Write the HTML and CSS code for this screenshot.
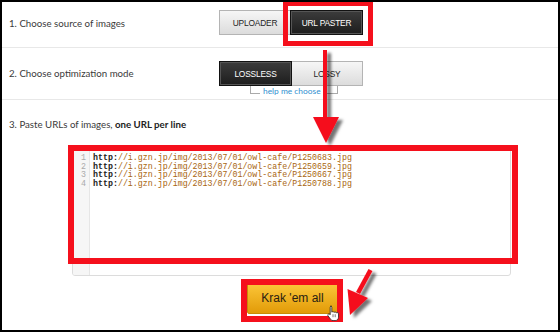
FILE: index.html
```html
<!DOCTYPE html>
<html lang="en">
<head>
    <meta charset="UTF-8">
    <title>Kraken - URL paster</title>
    <link rel="stylesheet" href="styles.css">
</head>
<body>
    <div class="page">
        <div class="row row-source">
            <div class="label">1. Choose source of images</div>
            <div class="toggle">
                <button class="btn btn-uploader">UPLOADER</button>
                <button class="btn btn-paster active">URL PASTER</button>
            </div>
        </div>

        <div class="row row-mode">
            <div class="label">2. Choose optimization mode</div>
            <div class="mode">
                <div class="toggle">
                    <button class="btn btn-lossless active">LOSSLESS</button>
                    <button class="btn btn-lossy">LOSSY</button>
                </div>
                <div class="help"><span class="help-text">help me choose</span></div>
            </div>
        </div>

        <div class="paste">
            <div class="label">3. Paste URLs of images, <b>one URL per line</b></div>
            <div class="editor">
                <div class="gutter">
                    <div>1</div>
                    <div>2</div>
                    <div>3</div>
                    <div>4</div>
                </div>
                <div class="code">
                    <div class="line"><span class="kw">http:</span><span class="str">//i.gzn.jp/img/2013/07/01/owl-cafe/P1250683.jpg</span></div>
                    <div class="line"><span class="kw">http:</span><span class="str">//i.gzn.jp/img/2013/07/01/owl-cafe/P1250659.jpg</span></div>
                    <div class="line"><span class="kw">http:</span><span class="str">//i.gzn.jp/img/2013/07/01/owl-cafe/P1250667.jpg</span></div>
                    <div class="line"><span class="kw">http:</span><span class="str">//i.gzn.jp/img/2013/07/01/owl-cafe/P1250788.jpg</span></div>
                </div>
            </div>
            <div class="submit">
                <button class="krak">Krak 'em all</button>
            </div>
        </div>

        <!-- annotations drawn over the screenshot -->
        <div class="mark mark-paster"></div>
        <div class="mark mark-editor"></div>
        <div class="mark mark-krak"></div>

        <svg class="arrows" width="556" height="328" viewBox="0 0 556 328">
            <defs>
                <filter id="shadow" x="-50%" y="-50%" width="200%" height="200%">
                    <feGaussianBlur in="SourceAlpha" stdDeviation="1.6"/>
                    <feOffset dx="4" dy="3" result="blur"/>
                    <feFlood flood-color="#000" flood-opacity="0.55"/>
                    <feComposite in2="blur" operator="in"/>
                    <feMerge>
                        <feMergeNode/>
                        <feMergeNode in="SourceGraphic"/>
                    </feMerge>
                </filter>
            </defs>
            <g filter="url(#shadow)" fill="#f5101c">
                <rect x="321" y="48" width="4" height="68"/>
                <polygon points="311,115 337,115 324,141"/>
            </g>
            <g filter="url(#shadow)" fill="#f5101c">
                <polygon points="366.5,267 370.5,269 358,292 354,290"/>
                <polygon points="345.5,287 366,296 348,313"/>
            </g>
        </svg>

        <svg class="cursor" width="12" height="16" viewBox="0 0 12 16">
            <path d="M3.5 1.2c.8 0 1.3.5 1.3 1.3v4.6c.3-.3.7-.4 1.1-.4.6 0 1 .3 1.2.7.3-.3.6-.4 1-.4.6 0 1 .3 1.2.8.3-.2.6-.3.9-.3.8 0 1.3.6 1.3 1.3v3.4c0 1.9-1.4 3.4-3.3 3.4H6.1c-1 0-1.8-.4-2.4-1.2L1 10.8c-.4-.6-.3-1.3.3-1.7.5-.3 1.2-.2 1.6.3l.3.4V2.5c0-.8.5-1.3 1.3-1.3z" fill="#fff" stroke="#222" stroke-width="0.8"/>
            <path d="M6 9.2v3M8.2 9.2v3" stroke="#222" stroke-width="0.6"/>
        </svg>
    </div>
</body>
</html>
```

FILE: styles.css
```css
* {
    box-sizing: border-box;
}

body {
    margin: 0;
    font-family: Lato, 'Open Sans', sans-serif;
    color: #333;
    background: #fff;
}

.page {
    position: relative;
    width: 560px;
    height: 332px;
    border: 2px solid #000;
    overflow: hidden;
    background: #fff;
}

.row {
    display: flex;
    border-bottom: 1px solid #e8e8e8;
    padding-left: 7px;
}

.label {
    width: 210px;
    font-size: 9.7px;
    color: #3a3a3a;
}

.label b {
    font-weight: bold;
    color: #222;
}

.row-source {
    align-items: center;
    padding-top: 8px;
    padding-bottom: 12px;
}

.row-mode {
    align-items: flex-start;
    padding-top: 13px;
    padding-bottom: 2px;
}

.row-mode .label {
    line-height: 25px;
}

.toggle {
    display: flex;
}

.btn {
    height: 25px;
    border: 1px solid #b4b4b4;
    background: linear-gradient(#f6f6f6, #dcdcdc);
    font-family: 'Liberation Sans', Arial, sans-serif;
    font-size: 8.4px;
    letter-spacing: -0.2px;
    color: #1e1e1e;
    padding: 0;
    cursor: pointer;
}

.btn.active {
    background: linear-gradient(#3c3c3c, #1d1d1d);
    border-color: #111;
    color: #fff;
    box-shadow: inset 0 0 0 1px #555;
}

.btn-uploader,
.btn-lossy {
    width: 71px;
}

.btn-paster,
.btn-lossless {
    width: 73px;
}

.btn-uploader {
    border-right: none;
}

.btn-lossy {
    border-left: none;
}

.help {
    display: flex;
    align-items: flex-start;
    margin-left: 31px;
    height: 11px;
}

.help::before,
.help::after {
    content: '';
    width: 9px;
    height: 7px;
    border-bottom: 1px solid #aaa;
}

.help::before {
    border-left: 1px solid #aaa;
}

.help::after {
    border-right: 1px solid #aaa;
    width: 13px;
}

.help-text {
    font-size: 8.4px;
    line-height: 11px;
    color: #2f8fd0;
    padding: 0 3px;
    white-space: nowrap;
}

.paste {
    padding: 17px 0 0 7px;
}

.paste .label {
    width: auto;
    line-height: 14px;
}

.editor {
    display: flex;
    margin: 17px 0 0 63px;
    width: 439px;
    height: 128px;
    border: 1px solid #dcdcdc;
    border-radius: 3px;
    overflow: hidden;
}

.gutter {
    width: 17px;
    background: #f6f6f6;
    border-right: 1px solid #e6e6e6;
    padding: 5px 3px 0 0;
    text-align: right;
    font-family: 'Liberation Mono', 'Courier New', monospace;
    font-size: 8.3px;
    line-height: 8.6px;
    color: #aaa;
}

.code {
    padding: 5px 0 0 3px;
    font-family: 'Liberation Mono', 'Courier New', monospace;
    font-size: 8.3px;
    line-height: 8.6px;
}

.line {
    white-space: pre;
}

.kw {
    color: #1a1a1a;
    font-weight: bold;
}

.str {
    color: #a9660f;
}

.submit {
    padding: 6px 0 0 238px;
}

.krak {
    width: 91px;
    height: 32px;
    border: 1px solid #c88a06;
    border-radius: 2px;
    background: linear-gradient(#fcc73a, #e29b08);
    font-family: 'Liberation Sans', Arial, sans-serif;
    font-size: 12px;
    color: #2a2112;
    padding: 0;
    cursor: pointer;
}

.mark {
    position: absolute;
    border: 6px solid #f5101c;
}

.mark-paster {
    left: 281px;
    top: -1px;
    width: 90px;
    height: 45px;
    border-width: 5px;
}

.mark-editor {
    left: 66px;
    top: 143px;
    width: 450px;
    height: 119px;
}

.mark-krak {
    left: 239px;
    top: 277px;
    width: 102px;
    height: 43px;
}

.arrows {
    position: absolute;
    left: 0;
    top: 0;
}

.cursor {
    position: absolute;
    left: 325px;
    top: 303px;
}
```
